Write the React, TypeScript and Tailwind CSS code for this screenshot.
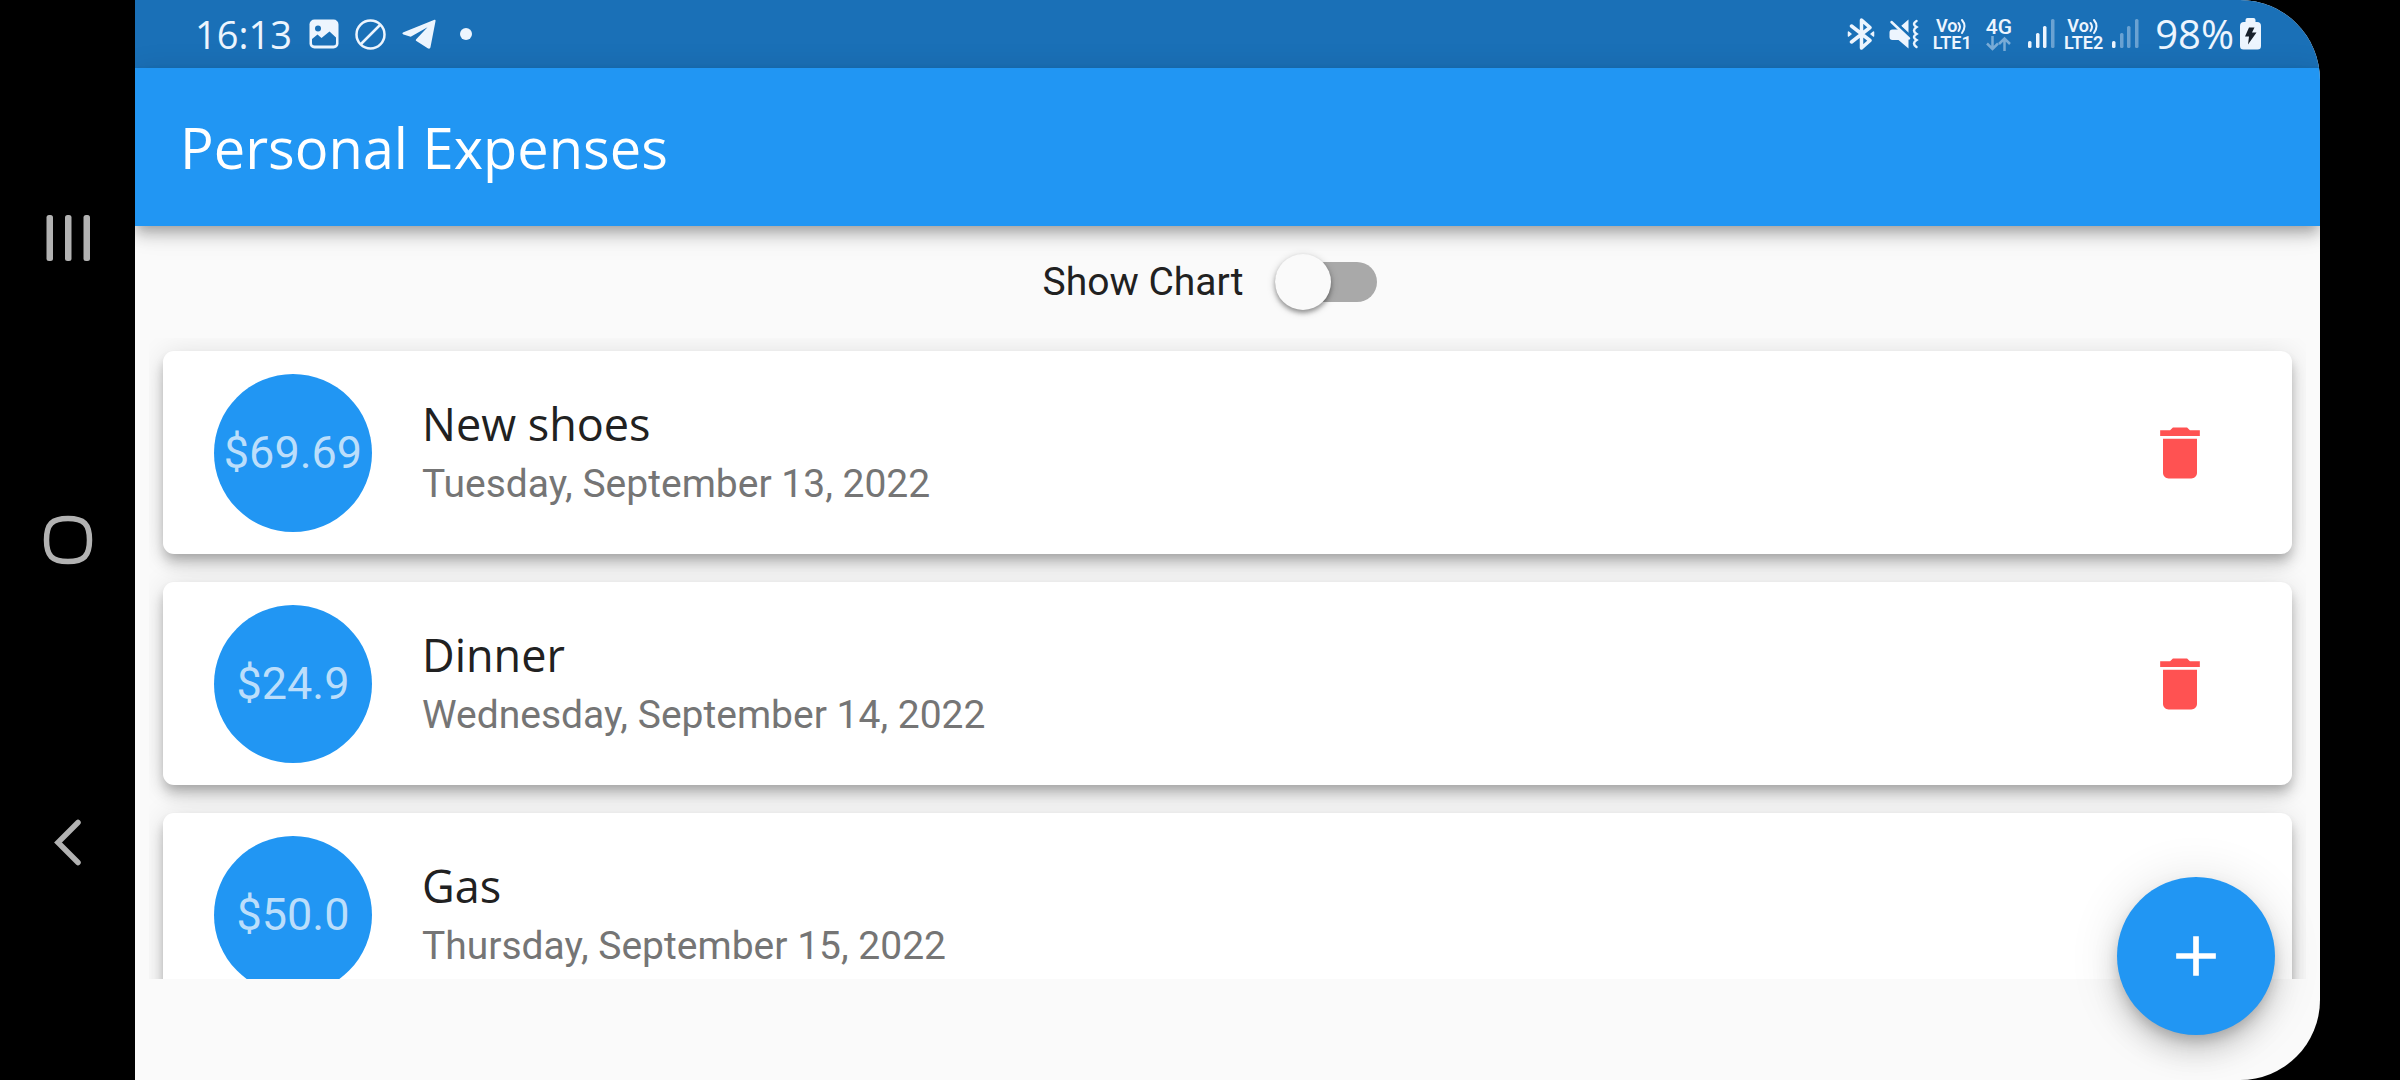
import { useState } from "react";
import { MdAdd, MdDelete } from "react-icons/md";

type Expense = { id: number; title: string; amount: string; date: string };

const initialExpenses: Expense[] = [
  { id: 1, title: "New shoes", amount: "$69.69", date: "Tuesday, September 13, 2022" },
  { id: 2, title: "Dinner", amount: "$24.9", date: "Wednesday, September 14, 2022" },
  { id: 3, title: "Gas", amount: "$50.0", date: "Thursday, September 15, 2022" },
];

function SystemNav() {
  return (
    <nav
      aria-label="System navigation"
      className="flex w-[135px] shrink-0 flex-col items-center justify-between py-[202px] text-[#b2b2b2]"
    >
      <button type="button" aria-label="Recent apps" className="flex size-18 items-center justify-center">
        <svg width="46" height="46" viewBox="0 0 46 46" fill="currentColor">
          <rect x="1.500" width="6.500" height="46" rx="2.500" />
          <rect x="20" width="6.500" height="46" rx="2.500" />
          <rect x="38.500" width="6.500" height="46" rx="2.500" />
        </svg>
      </button>
      <button type="button" aria-label="Home" className="flex size-18 items-center justify-center">
        <svg width="50" height="50" viewBox="0 0 50 50" fill="none" stroke="currentColor" strokeWidth="5.500">
          <path d="M25 3.500C41 3.500 46.500 9 46.500 25S41 46.500 25 46.500 3.500 41 3.500 25 9 3.500 25 3.500Z" />
        </svg>
      </button>
      <button type="button" aria-label="Back" className="flex size-18 items-center justify-center">
        <svg width="28" height="48" viewBox="0 0 28 48" fill="none" stroke="currentColor" strokeWidth="5.500" strokeLinecap="round">
          <path d="M24 4.500 4 24.500 24 44.500" />
        </svg>
      </button>
    </nav>
  );
}

function VoLte({ sim }: { sim: number }) {
  return (
    <span className="flex flex-col items-center font-[Roboto,sans-serif] text-[18px] leading-[17px] font-semibold">
      <span className="flex items-center">
        Vo
        <svg width="11" height="16" viewBox="0 0 11 16" fill="none" stroke="currentColor" strokeWidth="2" strokeLinecap="round">
          <path d="M1.500 5q3 3.500 0 8M5 2q5 6 0 13" />
        </svg>
      </span>
      <span>LTE{sim}</span>
    </span>
  );
}

function Signal({ level }: { level: number }) {
  const bars = [
    { x: 0, h: 7 },
    { x: 8, h: 15 },
    { x: 15, h: 22 },
    { x: 23, h: 29 },
  ];
  return (
    <svg width="27" height="30" viewBox="0 0 27 30" fill="currentColor">
      {bars.map((b, i) => (
        <rect key={b.x} x={b.x} y={29 - b.h} width="3.500" height={b.h} rx="1.500" opacity={i < level ? 1 : 0.38} />
      ))}
    </svg>
  );
}

function StatusBar() {
  return (
    <div className="flex h-[68px] shrink-0 items-center justify-between bg-[#1a70b7] pr-[59px] pl-[60px] font-['Open_Sans',sans-serif] text-[#edf5fe]">
      <div className="flex items-center gap-4">
        <span className="w-[98px] text-[38px] leading-[48px]">16:13</span>
        <svg width="30" height="30" viewBox="0 0 30 30">
          <rect x="0.500" y="0.500" width="29" height="29" rx="5" fill="currentColor" />
          <circle cx="9" cy="9.500" r="3" fill="#1a70b7" />
          <path d="M3 20 8.500 15.500 12.500 19 20.500 12.500 27 18.500V24a2.500 2.500 0 0 1-2.500 2.500H5.500A2.500 2.500 0 0 1 3 24Z" fill="#1a70b7" />
        </svg>
        <svg width="31" height="31" viewBox="0 0 31 31" fill="none" stroke="currentColor" strokeWidth="2.500">
          <circle cx="15.500" cy="15.500" r="14" />
          <path d="M6 25 25 6" />
        </svg>
        <svg width="34" height="30" viewBox="0 0 34 30" fill="currentColor">
          <path d="M32.500.800 1.500 13.300c-1.500.600-1.400 1.700 0 2.200L8.700 17.800 25.500 8.200 14.200 20.300c-.6.700-.5 1.300.2 1.800l11.300 7.200c1.500.900 2.500.300 2.800-1.200L33.500 2.200c.2-1.100-.1-1.700-1-1.400Z" />
        </svg>
        <span className="ml-2 size-3 rounded-full bg-current" />
      </div>
      <div className="flex items-center gap-4">
        <div className="flex items-center gap-[14px]">
          <svg width="28" height="32" viewBox="0 0 28 32" fill="none" stroke="currentColor" strokeWidth="3.500" strokeLinejoin="round" strokeLinecap="round">
            <path d="M4.500 8 23 22.500 14.500 30V2L23 9.500 4.500 24" />
            <path d="M1.500 14 4 16 1.500 18ZM26.500 14 24 16 26.500 18Z" fill="currentColor" strokeWidth="1.500" />
          </svg>
          <svg width="30" height="30" viewBox="0 0 30 30" fill="currentColor">
            <path d="M3.500 10.500H10L19.500 19v10.500L9.500 21h-6A3 3 0 0 1 .500 18v-4.500a3 3 0 0 1 3-3ZM19.500.500V14L12 7Z" />
            <g fill="none" strokeLinecap="round" strokeWidth="2.500">
              <path d="M7 3 22 17" stroke="#1a70b7" strokeWidth="1.500" />
              <path d="M2.500 3 20 19.500" stroke="currentColor" />
              <path d="M27.500 2q-5 3 0 6 -5 3.500 0 7 -5 3 0 6 -5 3.500 0 7" stroke="currentColor" />
            </g>
          </svg>
          <VoLte sim={1} />
          <span className="flex flex-col items-center font-[Roboto,sans-serif] text-[21px] leading-[18px] font-medium">
            4G
            <svg width="25" height="15" viewBox="0 0 25 15" fill="none" stroke="currentColor" strokeWidth="2.500" opacity="0.450">
              <path d="M6.500 0V13M1 7.500 6.500 13 12 7.500M18.500 15V2.500M13 8 18.500 2.500 24 8" />
            </svg>
          </span>
        </div>
        <div className="flex items-center gap-[9px]">
          <Signal level={3} />
          <VoLte sim={2} />
          <Signal level={1} />
        </div>
        <div className="flex items-center gap-[6px]">
          <span className="text-[40px] leading-[48px]">98%</span>
          <svg width="21" height="32" viewBox="0 0 21 32">
            <path d="M7.500 0h6q2 0 2 2v2H17q4 0 4 4V28q0 3.500-3.500 3.500H3.500Q0 31.500 0 28V8Q0 4 4 4H5.500V2q0-2 2-2Z" fill="currentColor" />
            <path d="M9 9.500H14.500L12 14.500H16.500L8 26.500 9 18.500H5Z" fill="#17202b" />
          </svg>
        </div>
      </div>
    </div>
  );
}

function ExpenseCard({ expense, onDelete }: { expense: Expense; onDelete: () => void }) {
  return (
    <li className="flex h-[203px] shrink-0 items-center gap-[50px] rounded-[11px] bg-white pr-[78px] pl-[51px] shadow-[0_6px_11px_-3px_rgba(0,0,0,0.2),0_11px_14px_0_rgba(0,0,0,0.14),0_3px_28px_0_rgba(0,0,0,0.12)]">
      <span className="flex size-[158px] shrink-0 items-center justify-center rounded-full bg-[#2196f3] text-[45px] text-[#bbdefb]">
        {expense.amount}
      </span>
      <div className="min-w-0 flex-1">
        <h2 className="font-['Open_Sans',sans-serif] text-[45px] leading-[62px] text-[#212121]">{expense.title}</h2>
        <p className="text-[39px] leading-[58px] text-[#757575]">{expense.date}</p>
      </div>
      <button type="button" aria-label={`Delete ${expense.title}`} onClick={onDelete} className="text-[#ff5252]">
        <MdDelete size={68} />
      </button>
    </li>
  );
}

export default function App() {
  const [expenses, setExpenses] = useState(initialExpenses);
  const [showChart, setShowChart] = useState(false);

  return (
    <div className="flex h-screen bg-black pr-20 font-[Roboto,sans-serif]">
      <SystemNav />
      <div className="relative flex min-w-0 flex-1 flex-col overflow-hidden rounded-r-[80px] bg-[#fafafa]">
        <StatusBar />
        <header className="relative z-10 flex h-[158px] shrink-0 items-center bg-[#2196f3] px-[45px] shadow-[0_6px_11px_-3px_rgba(0,0,0,0.2),0_11px_14px_0_rgba(0,0,0,0.14),0_3px_28px_0_rgba(0,0,0,0.12)]">
          <h1 className="font-['Open_Sans',sans-serif] text-[56px] text-white">Personal Expenses</h1>
        </header>
        <div className="flex h-28 shrink-0 items-center justify-center">
          <label htmlFor="show-chart" className="text-[39px] text-[#212121]">
            Show Chart
          </label>
          <span className="flex w-[169px] pl-8">
            <input
              id="show-chart"
              type="checkbox"
              role="switch"
              checked={showChart}
              onChange={(e) => setShowChart(e.target.checked)}
              className="relative h-10 w-[102px] appearance-none rounded-full bg-[#a9a9a9] before:absolute before:-top-2 before:left-0 before:size-14 before:rounded-full before:bg-[#fafafa] before:shadow-[0_3px_4px_rgba(0,0,0,0.3),0_2px_8px_rgba(0,0,0,0.2)] checked:bg-[#90caf9] checked:before:left-[46px] checked:before:bg-[#2196f3]"
            />
          </span>
        </div>
        <ul className="mx-[14px] mb-[101px] flex min-h-0 flex-1 flex-col gap-7 overflow-y-auto px-[14px] pt-[13px] pb-[14px] [scrollbar-width:none]">
          {expenses.map((expense) => (
            <ExpenseCard
              key={expense.id}
              expense={expense}
              onDelete={() => setExpenses((list) => list.filter((e) => e.id !== expense.id))}
            />
          ))}
        </ul>
        <button
          type="button"
          aria-label="Add expense"
          className="absolute right-[45px] bottom-[45px] flex size-[158px] items-center justify-center rounded-full bg-[#2196f3] text-white shadow-[0_8px_14px_-3px_rgba(0,0,0,0.2),0_17px_28px_0_rgba(0,0,0,0.14),0_3px_51px_0_rgba(0,0,0,0.12)]"
        >
          <MdAdd size={68} />
        </button>
      </div>
    </div>
  );
}
